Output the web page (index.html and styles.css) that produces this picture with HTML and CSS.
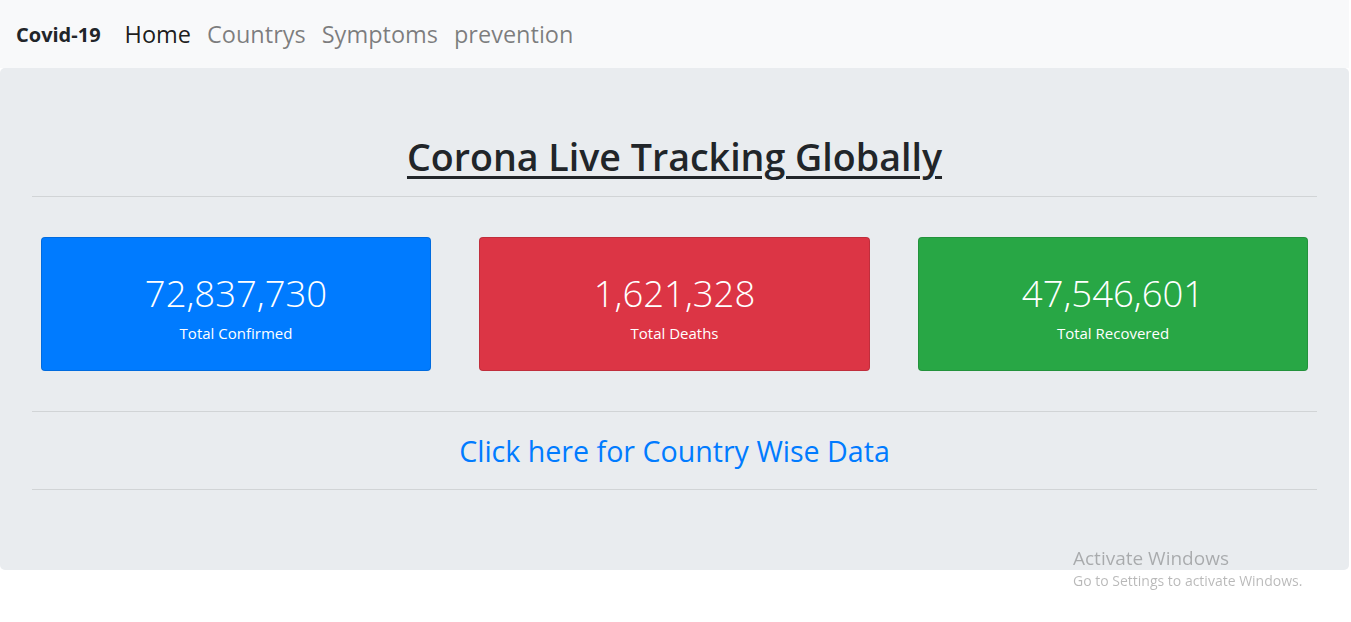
FILE: index.html
```html
<!DOCTYPE html>
<html lang="en">
<head>
<meta charset="utf-8">
<title>Covid-19</title>
<link rel="stylesheet" href="styles.css">
</head>
<body>
<div class="page">
  <nav class="navbar">
    <a class="brand" href="#">Covid-19</a>
    <ul class="nav">
      <li><a class="nav-link active" href="#">Home</a></li>
      <li><a class="nav-link" href="#">Countrys</a></li>
      <li><a class="nav-link" href="#">Symptoms</a></li>
      <li><a class="nav-link" href="#">prevention</a></li>
    </ul>
  </nav>
  <main class="jumbotron">
    <h1 class="title">Corona Live Tracking Globally</h1>
    <hr class="rule">
    <div class="cards">
      <div class="card card-blue">
        <div class="card-num">72,837,730</div>
        <div class="card-label">Total Confirmed</div>
      </div>
      <div class="card card-red">
        <div class="card-num">1,621,328</div>
        <div class="card-label">Total Deaths</div>
      </div>
      <div class="card card-green">
        <div class="card-num">47,546,601</div>
        <div class="card-label">Total Recovered</div>
      </div>
    </div>
    <hr class="rule rule-lower">
    <a class="country-link" href="#">Click here for Country Wise Data</a>
    <hr class="rule rule-bottom">
  </main>
</div>
<div class="watermark">
  <div class="wm-title">Activate Windows</div>
  <div class="wm-sub">Go to Settings to activate Windows.</div>
</div>
</body>
</html>
```
FILE: styles.css
```css
* { box-sizing: border-box; }
html, body { margin: 0; padding: 0; background: #fff; }
body {
  font-family: "Open Sans", "Noto Sans", sans-serif;
  color: #212529;
}
.page {
  width: calc(100% - 2px);
}
.navbar {
  display: flex;
  align-items: center;
  height: 68px;
  padding: 0 16px;
  background: #f8f9fa;
}
.brand {
  font-size: 20px;
  font-weight: 700;
  color: #212529;
  text-decoration: none;
  margin-right: 16px;
}
.nav {
  display: flex;
  list-style: none;
  margin: 0;
  padding: 0;
}
.nav-link {
  display: block;
  padding: 0 8px;
  font-size: 23.5px;
  color: rgba(0, 0, 0, 0.5);
  text-decoration: none;
}
.nav-link.active { color: rgba(0, 0, 0, 0.9); }
.jumbotron {
  background: #e9ecef;
  border-radius: 5px;
  height: 502px;
  padding: 61px 32px 0;
  display: flex;
  flex-direction: column;
  align-items: stretch;
}
.title {
  margin: 0;
  text-align: center;
  font-size: 37.6px;
  font-weight: 600;
  line-height: 56px;
  text-decoration: underline;
  text-decoration-thickness: 3px;
  text-underline-offset: 5px;
}
.rule {
  border: 0;
  border-top: 1px solid rgba(0, 0, 0, 0.1);
  margin: 11px 0 0;
  width: 100%;
}
.cards {
  display: flex;
  justify-content: space-between;
  padding: 0 9px;
  margin-top: 40px;
}
.card {
  width: 390px;
  height: 134px;
  border-radius: 4px;
  border: 1px solid rgba(0, 0, 0, 0.125);
  color: #fff;
  display: flex;
  flex-direction: column;
  align-items: center;
  padding-top: 30px;
}
.card-red { width: 391px; }
.card-blue { background: #007bff; }
.card-red { background: #dc3545; }
.card-green { background: #28a745; }
.card-num {
  font-size: 36.5px;
  font-weight: 300;
  line-height: 50px;
}
.card-label {
  font-size: 15px;
  line-height: 20px;
  margin-top: 5px;
}
.rule-lower { margin-top: 40px; }
.country-link {
  display: block;
  text-align: center;
  color: #007bff;
  text-decoration: none;
  font-size: 28.6px;
  line-height: 40px;
  margin-top: 19px;
}
.rule-bottom { margin-top: 18px; }
.watermark {
  position: fixed;
  left: 1073px;
  top: 545px;
  color: rgba(0, 0, 0, 0.28);
  pointer-events: none;
}
.wm-title { font-size: 19px; line-height: 26px; }
.wm-sub { font-size: 14px; line-height: 20px; }
```
